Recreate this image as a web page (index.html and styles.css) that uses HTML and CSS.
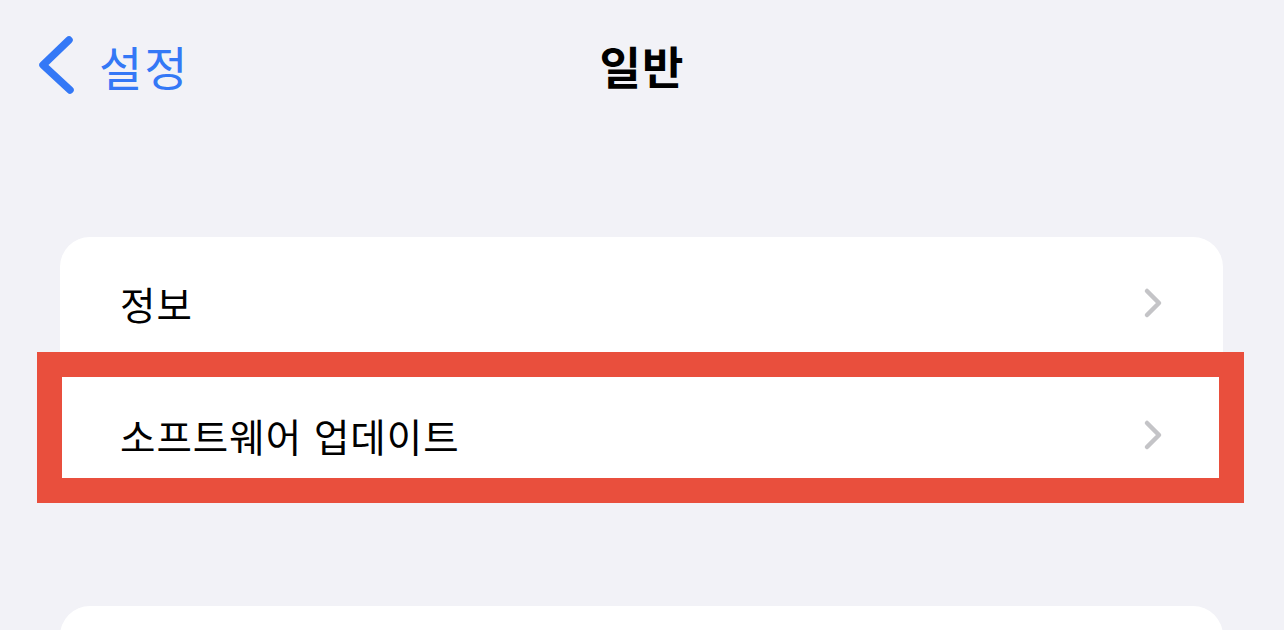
FILE: index.html
```html
<!DOCTYPE html>
<html lang="ko">
<head>
  <meta charset="UTF-8">
  <title>일반</title>
  <link rel="stylesheet" href="styles.css">
</head>
<body>
  <header class="nav">
    <a class="nav-back" href="#">
      <svg class="nav-back-icon" width="38" height="60" viewBox="0 0 38 60">
        <path d="M32 5 L6 30 L33 55" fill="none" stroke="#3478f6" stroke-width="7.5" stroke-linecap="round" stroke-linejoin="round"/>
      </svg>
      <span>설정</span>
    </a>
    <h1 class="nav-title">일반</h1>
    <div></div>
  </header>

  <section class="group">
    <a class="row" href="#">
      <span class="row-label">정보</span>
      <svg class="row-chevron" width="20" height="32" viewBox="0 0 20 32">
        <path d="M4 4 L16 16 L4 28" fill="none" stroke="#c4c4c7" stroke-width="4.5" stroke-linecap="round" stroke-linejoin="round"/>
      </svg>
    </a>
    <a class="row row-highlight" href="#">
      <span class="row-label">소프트웨어 업데이트</span>
      <svg class="row-chevron" width="20" height="32" viewBox="0 0 20 32">
        <path d="M4 4 L16 16 L4 28" fill="none" stroke="#c4c4c7" stroke-width="4.5" stroke-linecap="round" stroke-linejoin="round"/>
      </svg>
    </a>
  </section>

  <section class="group group-next">
    <div class="row"></div>
  </section>
</body>
</html>
```

FILE: styles.css
```css
body {
  margin: 0;
  height: 630px;
  overflow: hidden;
  background-color: #f2f2f7;
  font-family: "Noto Sans CJK KR", "Noto Sans", sans-serif;
  color: #000;
}

a {
  color: inherit;
  text-decoration: none;
}

.nav {
  display: grid;
  grid-template-columns: 1fr auto 1fr;
  align-items: center;
  height: 130px;
}

.nav-back {
  display: flex;
  align-items: center;
  gap: 24px;
  padding-left: 37px;
  color: #3478f6;
  font-size: 47px;
  letter-spacing: 2px;
}

.nav-back-icon {
  display: block;
}

.nav-title {
  margin: 0;
  font-size: 45px;
  font-weight: 700;
  letter-spacing: 1px;
}

.group {
  margin: 107px 61px 0 60px;
  background-color: #fff;
  border-radius: 30px;
}

.row {
  position: relative;
  display: flex;
  align-items: center;
  justify-content: space-between;
  height: 132px;
  padding: 0 60px;
}

.row-label {
  font-size: 38.5px;
  letter-spacing: 1px;
}

.row-chevron {
  display: block;
}

.row-highlight::after {
  content: "";
  position: absolute;
  top: -17px;
  bottom: -2px;
  left: -23px;
  right: -21px;
  border: 25px solid #e94f3d;
  pointer-events: none;
}

.group-next {
  margin-top: 105px;
}
```
